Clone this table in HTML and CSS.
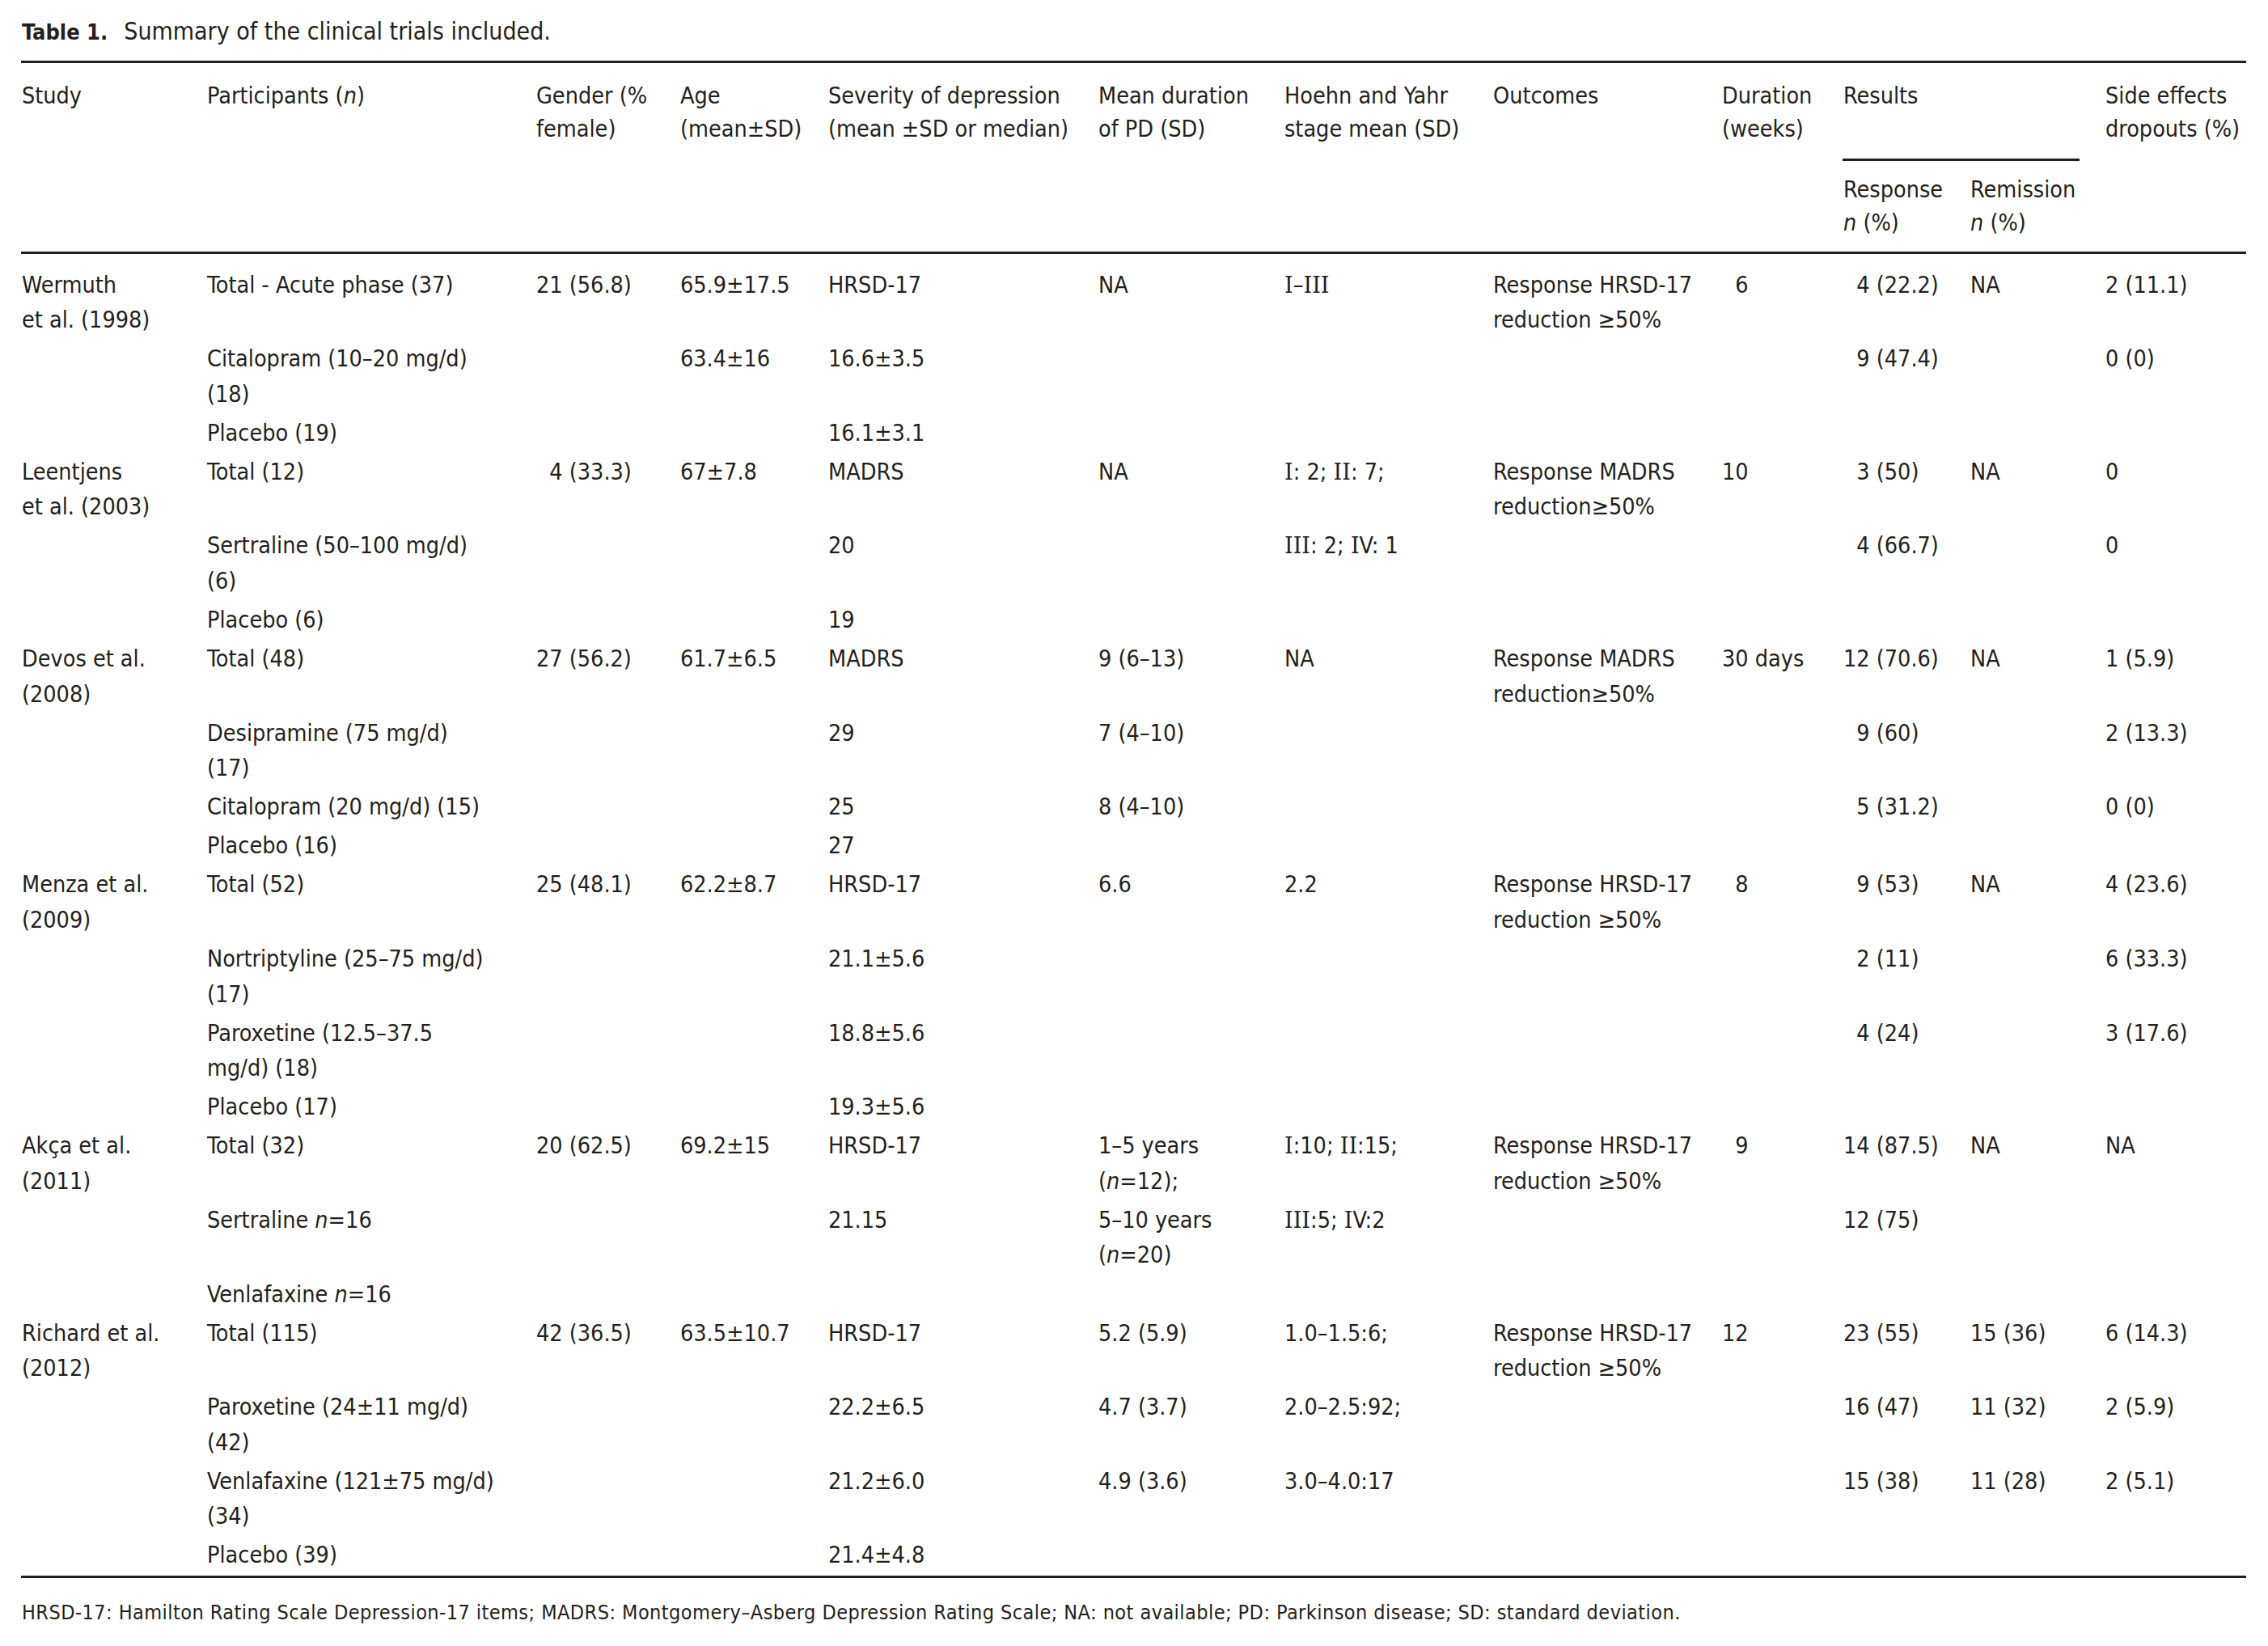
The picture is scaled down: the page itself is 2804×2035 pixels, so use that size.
FILE: index.html
```html
<!DOCTYPE html>
<html lang="en">
<head>
<meta charset="utf-8">
<title>Table 1</title>
<link rel="stylesheet" href="styles.css">
</head>
<body>
<div class="page">
  <div class="caption"><span class="label">Table 1.</span>Summary of the clinical trials included.</div>
  <table class="trials">
    <colgroup>
      <col class="c1"><col class="c2"><col class="c3"><col class="c4"><col class="c5"><col class="c6">
      <col class="c7"><col class="c8"><col class="c9"><col class="c10"><col class="c11"><col class="c12">
    </colgroup>
    <thead>
      <tr>
        <th rowspan="2">Study</th>
        <th rowspan="2">Participants (<i>n</i>)</th>
        <th rowspan="2">Gender (%<br>female)</th>
        <th rowspan="2">Age<br>(mean±SD)</th>
        <th rowspan="2">Severity of depression<br>(mean ±SD or median)</th>
        <th rowspan="2">Mean duration<br>of PD (SD)</th>
        <th rowspan="2">Hoehn and Yahr<br>stage mean (SD)</th>
        <th rowspan="2">Outcomes</th>
        <th rowspan="2">Duration<br>(weeks)</th>
        <th colspan="2" class="results">Results</th>
        <th rowspan="2">Side effects<br>dropouts (%)</th>
      </tr>
      <tr class="sub">
        <th>Response<br><i>n</i> (%)</th>
        <th>Remission<br><i>n</i> (%)</th>
      </tr>
    </thead>
    <tbody>
      <tr class="first">
        <td>Wermuth<br>et al. (1998)</td><td>Total - Acute phase (37)</td><td>21 (56.8)</td><td>65.9±17.5</td><td>HRSD-17</td><td>NA</td><td><span class="rn">I</span>–<span class="rn">III</span></td><td>Response HRSD-17<br>reduction ≥50%</td><td><span class="fig">0</span>6</td><td><span class="fig">0</span>4 (22.2)</td><td>NA</td><td>2 (11.1)</td>
      </tr>
      <tr>
        <td></td><td>Citalopram (10–20 mg/d)<br>(18)</td><td></td><td>63.4±16</td><td>16.6±3.5</td><td></td><td></td><td></td><td></td><td><span class="fig">0</span>9 (47.4)</td><td></td><td>0 (0)</td>
      </tr>
      <tr>
        <td></td><td>Placebo (19)</td><td></td><td></td><td>16.1±3.1</td><td></td><td></td><td></td><td></td><td></td><td></td><td></td>
      </tr>
      <tr>
        <td>Leentjens<br>et al. (2003)</td><td>Total (12)</td><td><span class="fig">0</span>4 (33.3)</td><td>67±7.8</td><td>MADRS</td><td>NA</td><td><span class="rn">I</span>: 2; <span class="rn">II</span>: 7;</td><td>Response MADRS<br>reduction≥50%</td><td>10</td><td><span class="fig">0</span>3 (50)</td><td>NA</td><td>0</td>
      </tr>
      <tr>
        <td></td><td>Sertraline (50–100 mg/d)<br>(6)</td><td></td><td></td><td>20</td><td></td><td><span class="rn">III</span>: 2; <span class="rn">I</span>V: 1</td><td></td><td></td><td><span class="fig">0</span>4 (66.7)</td><td></td><td>0</td>
      </tr>
      <tr>
        <td></td><td>Placebo (6)</td><td></td><td></td><td>19</td><td></td><td></td><td></td><td></td><td></td><td></td><td></td>
      </tr>
      <tr>
        <td>Devos et al.<br>(2008)</td><td>Total (48)</td><td>27 (56.2)</td><td>61.7±6.5</td><td>MADRS</td><td>9 (6–13)</td><td>NA</td><td>Response MADRS<br>reduction≥50%</td><td>30 days</td><td>12 (70.6)</td><td>NA</td><td>1 (5.9)</td>
      </tr>
      <tr>
        <td></td><td>Desipramine (75 mg/d)<br>(17)</td><td></td><td></td><td>29</td><td>7 (4–10)</td><td></td><td></td><td></td><td><span class="fig">0</span>9 (60)</td><td></td><td>2 (13.3)</td>
      </tr>
      <tr>
        <td></td><td>Citalopram (20 mg/d) (15)</td><td></td><td></td><td>25</td><td>8 (4–10)</td><td></td><td></td><td></td><td><span class="fig">0</span>5 (31.2)</td><td></td><td>0 (0)</td>
      </tr>
      <tr>
        <td></td><td>Placebo (16)</td><td></td><td></td><td>27</td><td></td><td></td><td></td><td></td><td></td><td></td><td></td>
      </tr>
      <tr>
        <td>Menza et al.<br>(2009)</td><td>Total (52)</td><td>25 (48.1)</td><td>62.2±8.7</td><td>HRSD-17</td><td>6.6</td><td>2.2</td><td>Response HRSD-17<br>reduction ≥50%</td><td><span class="fig">0</span>8</td><td><span class="fig">0</span>9 (53)</td><td>NA</td><td>4 (23.6)</td>
      </tr>
      <tr>
        <td></td><td>Nortriptyline (25–75 mg/d)<br>(17)</td><td></td><td></td><td>21.1±5.6</td><td></td><td></td><td></td><td></td><td><span class="fig">0</span>2 (11)</td><td></td><td>6 (33.3)</td>
      </tr>
      <tr>
        <td></td><td>Paroxetine (12.5–37.5<br>mg/d) (18)</td><td></td><td></td><td>18.8±5.6</td><td></td><td></td><td></td><td></td><td><span class="fig">0</span>4 (24)</td><td></td><td>3 (17.6)</td>
      </tr>
      <tr>
        <td></td><td>Placebo (17)</td><td></td><td></td><td>19.3±5.6</td><td></td><td></td><td></td><td></td><td></td><td></td><td></td>
      </tr>
      <tr>
        <td>Akça et al.<br>(2011)</td><td>Total (32)</td><td>20 (62.5)</td><td>69.2±15</td><td>HRSD-17</td><td>1–5 years<br>(<i>n</i>=12);</td><td><span class="rn">I</span>:10; <span class="rn">II</span>:15;</td><td>Response HRSD-17<br>reduction ≥50%</td><td><span class="fig">0</span>9</td><td>14 (87.5)</td><td>NA</td><td>NA</td>
      </tr>
      <tr>
        <td></td><td>Sertraline <i>n</i>=16</td><td></td><td></td><td>21.15</td><td>5–10 years<br>(<i>n</i>=20)</td><td><span class="rn">III</span>:5; <span class="rn">I</span>V:2</td><td></td><td></td><td>12 (75)</td><td></td><td></td>
      </tr>
      <tr>
        <td></td><td>Venlafaxine <i>n</i>=16</td><td></td><td></td><td></td><td></td><td></td><td></td><td></td><td></td><td></td><td></td>
      </tr>
      <tr>
        <td>Richard et al.<br>(2012)</td><td>Total (115)</td><td>42 (36.5)</td><td>63.5±10.7</td><td>HRSD-17</td><td>5.2 (5.9)</td><td>1.0–1.5:6;</td><td>Response HRSD-17<br>reduction ≥50%</td><td>12</td><td>23 (55)</td><td>15 (36)</td><td>6 (14.3)</td>
      </tr>
      <tr>
        <td></td><td>Paroxetine (24±11 mg/d)<br>(42)</td><td></td><td></td><td>22.2±6.5</td><td>4.7 (3.7)</td><td>2.0–2.5:92;</td><td></td><td></td><td>16 (47)</td><td>11 (32)</td><td>2 (5.9)</td>
      </tr>
      <tr>
        <td></td><td>Venlafaxine (121±75 mg/d)<br>(34)</td><td></td><td></td><td>21.2±6.0</td><td>4.9 (3.6)</td><td>3.0–4.0:17</td><td></td><td></td><td>15 (38)</td><td>11 (28)</td><td>2 (5.1)</td>
      </tr>
      <tr class="last">
        <td></td><td>Placebo (39)</td><td></td><td></td><td>21.4±4.8</td><td></td><td></td><td></td><td></td><td></td><td></td><td></td>
      </tr>
    </tbody>
  </table>
  <p class="note">HRSD-17: Hamilton Rating Scale Depression-17 items; MADRS: Montgomery–Asberg Depression Rating Scale; NA: not available; PD: Parkinson disease; SD: standard deviation.</p>
</div>
</body>
</html>
```

FILE: styles.css
```css
html, body {
  margin: 0;
  padding: 0;
  background: #ffffff;
}

body {
  color: #231f20;
  font-family: "DejaVu Sans Condensed", "DejaVu Sans", sans-serif;
  font-stretch: semi-condensed;
}

.page {
  padding: 0 26px;
}

.caption {
  font-size: 30px;
  line-height: 40px;
  margin: 19px 0 15px 1px;
  white-space: nowrap;
}

.caption .label {
  font-weight: bold;
  font-size: 27px;
  margin-right: 20px;
}

.trials {
  border-collapse: separate;
  border-spacing: 0;
  table-layout: fixed;
  width: 2751px;
  border-top: 3px solid #231f20;
  border-bottom: 3px solid #231f20;
  font-size: 28.5px;
}

col.c1 { width: 229px; }
col.c2 { width: 407px; }
col.c3 { width: 178px; }
col.c4 { width: 183px; }
col.c5 { width: 334px; }
col.c6 { width: 230px; }
col.c7 { width: 258px; }
col.c8 { width: 283px; }
col.c9 { width: 150px; }
col.c10 { width: 157px; }
col.c11 { width: 167px; }
col.c12 { width: 175px; }

.trials th,
.trials td {
  text-align: left;
  vertical-align: top;
  font-weight: normal;
  white-space: nowrap;
}

.trials th {
  line-height: 40.5px;
  padding: 21px 0 0 1px;
}

.trials th.results {
  padding-bottom: 59px;
  background: linear-gradient(#231f20, #231f20) no-repeat 0 100% / calc(100% - 31px) 3px;
}

.trials tr.sub th {
  padding: 16.5px 0 15px 1px;
}

.trials td {
  line-height: 43.5px;
  padding: 2.3px 0 2.3px 1px;
}

.trials tr.first td {
  border-top: 3px solid #231f20;
  padding-top: 16.5px;
}

.trials tr.last td {
  padding-bottom: 3px;
}

.trials i {
  font-style: italic;
}

.rn {
  font-family: "DejaVu Serif", serif;
  font-stretch: normal;
  font-size: 27px;
}

.fig {
  visibility: hidden;
}

.note {
  font-size: 25px;
  letter-spacing: 0.45px;
  line-height: 30px;
  margin: 28.5px 0 0 1px;
  white-space: nowrap;
}
```
